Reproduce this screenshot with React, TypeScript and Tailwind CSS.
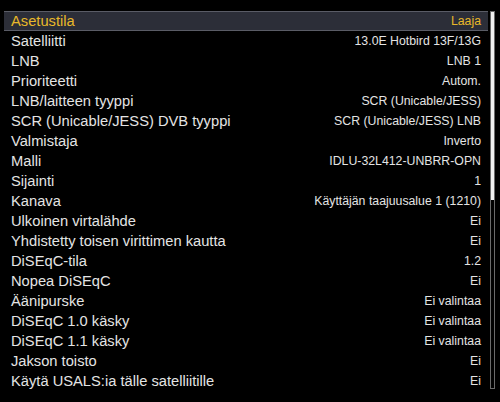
import React from 'react';

type Row = { label: string; value: string };

const rows: Row[] = [
    { label: 'Asetustila', value: 'Laaja' },
    { label: 'Satelliitti', value: '13.0E Hotbird 13F/13G' },
    { label: 'LNB', value: 'LNB 1' },
    { label: 'Prioriteetti', value: 'Autom.' },
    { label: 'LNB/laitteen tyyppi', value: 'SCR (Unicable/JESS)' },
    { label: 'SCR (Unicable/JESS) DVB tyyppi', value: 'SCR (Unicable/JESS) LNB' },
    { label: 'Valmistaja', value: 'Inverto' },
    { label: 'Malli', value: 'IDLU-32L412-UNBRR-OPN' },
    { label: 'Sijainti', value: '1' },
    { label: 'Kanava', value: 'Käyttäjän taajuusalue 1 (1210)' },
    { label: 'Ulkoinen virtalähde', value: 'Ei' },
    { label: 'Yhdistetty toisen virittimen kautta', value: 'Ei' },
    { label: 'DiSEqC-tila', value: '1.2' },
    { label: 'Nopea DiSEqC', value: 'Ei' },
    { label: 'Äänipurske', value: 'Ei valintaa' },
    { label: 'DiSEqC 1.0 käsky', value: 'Ei valintaa' },
    { label: 'DiSEqC 1.1 käsky', value: 'Ei valintaa' },
    { label: 'Jakson toisto', value: 'Ei' },
    { label: 'Käytä USALS:ia tälle satelliitille', value: 'Ei' },
];

const App = () => {
    return (
        <div className="w-[500px] h-[402px] bg-black overflow-hidden font-['Liberation_Sans',Arial,sans-serif]">
            <div className="flex pt-[11px] pl-[4px]">
                <div className="w-[484px] flex flex-col">
                    {rows.map((row, i) => (
                        <div
                            key={row.label}
                            className={
                                i === 0
                                    ? 'h-[20px] flex items-center justify-between pl-[7px] pr-[7px] bg-[#2c2e38] border-t border-b border-[#5a5c66] text-[#e8b82a]'
                                    : 'h-[20px] flex items-center justify-between pl-[7px] pr-[7px] text-[#e4e4e4]'
                            }
                        >
                            <span className="text-[14.7px] leading-none">{row.label}</span>
                            <span className="text-[12.3px] leading-none">{row.value}</span>
                        </div>
                    ))}
                </div>
                <div className="ml-[2px] w-[5px] h-[378px] border border-[#6a6a6a] bg-black flex flex-col">
                    <div className="h-[188px] bg-[#f0f0f0]"></div>
                </div>
            </div>
        </div>
    );
};

export default App;
